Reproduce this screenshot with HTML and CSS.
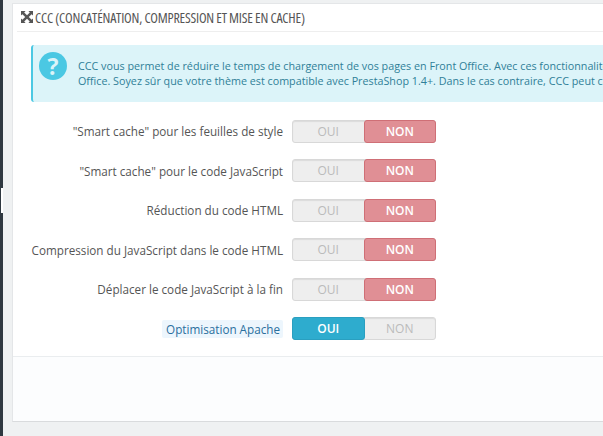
FILE: index.html
```html
<!DOCTYPE html>
<html lang="fr">
<head>
    <meta charset="UTF-8">
    <title>CCC</title>
    <link rel="stylesheet" href="styles.css">
</head>
<body>
    <!-- Sidebar edge -->
    <div class="sidebar"><div class="sidebar-notch"></div></div>

    <div class="content">
        <div class="panel">
            <div class="panel-heading">
                <svg class="heading-icon" viewBox="0 0 12 12" width="12" height="12">
                    <path d="M0 0h4.6L3.2 1.4 6 4.2 8.8 1.4 7.4 0H12v4.6L10.6 3.2 7.8 6l2.8 2.8L12 7.400V12H7.400l1.400-1.400L6 7.800 3.200 10.600 4.600 12H0V7.400l1.400 1.400L4.200 6 1.400 3.200 0 4.600z" fill="#555"/>
                </svg>
                <span class="heading-title">CCC (CONCATÉNATION, COMPRESSION ET MISE EN CACHE)</span>
            </div>

            <div class="panel-body">
                <div class="alert">
                    <div class="alert-icon">?</div>
                    <p class="alert-text">CCC vous permet de réduire le temps de chargement de vos pages en Front Office. Avec ces fonctionnalités<br>Office. Soyez sûr que votre thème est compatible avec PrestaShop 1.4+. Dans le cas contraire, CCC peut causer</p>
                </div>

                <div class="form-row">
                    <label class="row-label">"Smart cache" pour les feuilles de style</label>
                    <div class="switch"><span class="opt">OUI</span><span class="opt opt-no">NON</span></div>
                </div>
                <div class="form-row">
                    <label class="row-label">"Smart cache" pour le code JavaScript</label>
                    <div class="switch"><span class="opt">OUI</span><span class="opt opt-no">NON</span></div>
                </div>
                <div class="form-row">
                    <label class="row-label">Réduction du code HTML</label>
                    <div class="switch"><span class="opt">OUI</span><span class="opt opt-no">NON</span></div>
                </div>
                <div class="form-row">
                    <label class="row-label">Compression du JavaScript dans le code HTML</label>
                    <div class="switch"><span class="opt">OUI</span><span class="opt opt-no">NON</span></div>
                </div>
                <div class="form-row">
                    <label class="row-label">Déplacer le code JavaScript à la fin</label>
                    <div class="switch"><span class="opt">OUI</span><span class="opt opt-no">NON</span></div>
                </div>
                <div class="form-row">
                    <label class="row-label"><span class="label-hint">Optimisation Apache</span></label>
                    <div class="switch"><span class="opt opt-yes">OUI</span><span class="opt">NON</span></div>
                </div>
            </div>

            <div class="panel-footer"></div>
        </div>
    </div>
</body>
</html>
```

FILE: styles.css
```css
html, body {
    height: 100%;
    overflow: hidden;
}
body {
    margin: 0;
    display: flex;
    background-color: #eff1f2;
    font-family: "Open Sans", sans-serif;
    font-size: 11.700px;
    color: #555;
}
.sidebar {
    width: 3px;
    flex: none;
    background-color: #2f3840;
    padding-top: 188px;
    box-sizing: border-box;
}
.sidebar-notch {
    height: 25px;
    margin-left: 1px;
    background-color: #fff;
}
.content {
    flex: 1;
    min-width: 0;
    padding: 3px 0 0 9px;
}
.panel {
    height: 419px;
    background-color: #fff;
    border-left: 1px solid #e4e6e8;
    border-top: 1px solid #e4e6e8;
    border-bottom: 1px solid #d9dbdd;
    box-sizing: border-box;
    display: flex;
    flex-direction: column;
}
.panel-heading {
    height: 27px;
    margin-left: 4px;
    border-bottom: 1px solid #eee;
    display: flex;
    align-items: center;
    gap: 2px;
    padding-left: 4px;
    white-space: nowrap;
}
.heading-icon {
    flex: none;
}
.heading-title {
    font-size: 14px;
    font-stretch: 75%;
    font-weight: 400;
    letter-spacing: -0.220px;
    color: #555;
}
.panel-body {
    flex: 1;
    padding: 13px 0 0 18px;
}
.alert {
    height: 57px;
    box-sizing: border-box;
    background-color: #dcf4f9;
    border-left: 2px solid #4bc8e3;
    border-radius: 3px 0 0 3px;
    display: flex;
    align-items: center;
    white-space: nowrap;
    overflow: hidden;
    margin-bottom: 17.700px;
}
.alert-icon {
    width: 28px;
    height: 28px;
    flex: none;
    margin: -15px 11px 0 6px;
    border-radius: 50%;
    background-color: #4bc8e3;
    color: #dcf4f9;
    font-weight: 700;
    font-size: 23px;
    line-height: 28px;
    text-align: center;
}
.alert-text {
    margin: 2px 0 0 0;
    font-size: 10.750px;
    line-height: 15px;
    color: #2f7f98;
}
.form-row {
    display: flex;
    align-items: center;
    height: 24px;
    margin-bottom: 15.500px;
}
.row-label {
    width: 252px;
    flex: none;
    text-align: right;
    white-space: nowrap;
}
.label-hint {
    background-color: #edf6fd;
    color: #2a6f9e;
    padding: 1px 3px 1px 4px;
    border-radius: 2px;
}
.switch {
    display: flex;
    margin-left: 9px;
    width: 144px;
    height: 23px;
    background-color: #eee;
    border: 1px solid #d8d8d8;
    box-shadow: inset 0 1px 1px rgba(0, 0, 0, 0.08);
    box-sizing: border-box;
    border-radius: 3px;
}
.opt {
    flex: 1;
    text-align: center;
    font-size: 12px;
    line-height: 21px;
    color: #bbb;
}
.opt-no {
    margin: -1px -1px -1px 0;
    background-color: #e08f95;
    border: 1px solid #cf6f76;
    border-radius: 3px;
    color: #fff;
    font-weight: 600;
}
.opt-yes {
    margin: -1px 0 -1px -1px;
    background-color: #2eacce;
    border: 1px solid #2a9fc0;
    border-radius: 3px;
    color: #fff;
    font-weight: 600;
}
.panel-footer {
    height: 65px;
    background-color: #fcfdfe;
    border-top: 1px solid #eaedef;
}
```
